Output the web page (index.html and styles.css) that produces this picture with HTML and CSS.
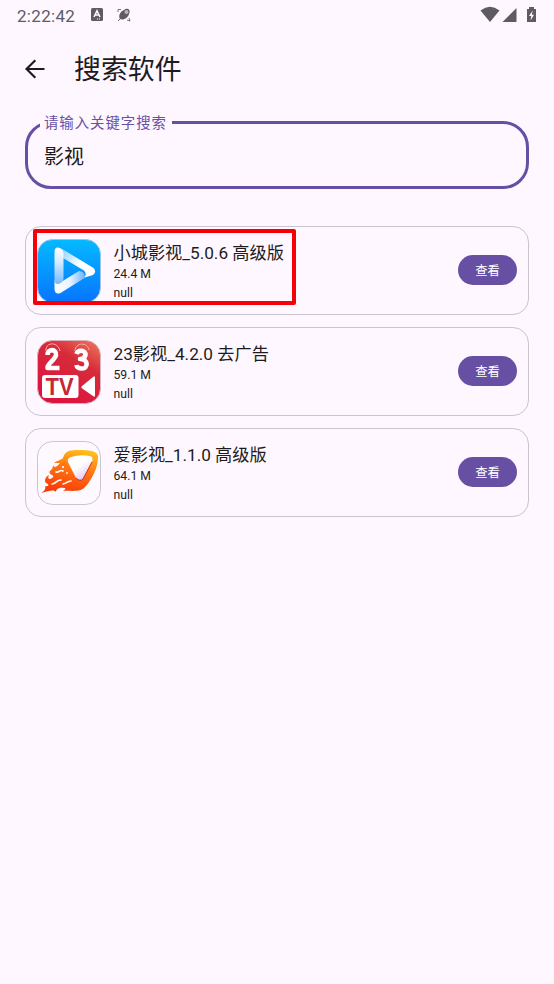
FILE: index.html
```html
<!DOCTYPE html>
<html lang="zh-CN">
<head>
<meta charset="utf-8">
<title>搜索软件</title>
<link rel="stylesheet" href="styles.css">
</head>
<body>
<header class="status">
  <span class="clock">2:22:42</span>
  <svg class="note-a" width="12" height="13" viewBox="0 0 12 13"><rect width="12" height="13" rx="1.5" fill="#5f5b63"/><path d="M3 9 L6 2.8 L9 9 M4.2 7 H7.8" fill="none" stroke="#fef7ff" stroke-width="1.5"/><path d="M6 11h1M8 11h1" stroke="#fef7ff"/></svg>
  <svg class="note-b" width="14" height="14" viewBox="0 0 14 14"><path d="M2.8 10.8 C1 7 4 3 7 2 C11-1 14 2 12 6 C11 10 6 13 2.8 10.8Z" fill="#5f5b63"/><circle cx="9.5" cy="4" r="2" fill="#b9b3bb"/><path d="M1 4V1.5H4M1 13l2-2M10 12l3 1-1-3" fill="none" stroke="#77727a"/></svg>
  <svg class="signals" width="58" height="18" viewBox="0 0 58 18"><path d="M0.5 4.5 Q10 -2.8 19.5 4.5 L10 16Z M22.5 16 L36.5 2V16Z" fill="#5f5b63"/><path d="M47 3h2V1h5v2h2v13H47Z" fill="#5f5b63"/><path d="M52.7 4.5 L49 10h2.2l-.6 4.5L54 8.7h-2.2Z" fill="#fef7ff"/></svg>
</header>
<nav class="appbar">
  <svg class="back" width="20" height="20" viewBox="0 0 20 20"><path d="M19.5 10H1.8M10.3 1.2L1.5 10l8.8 8.8" fill="none" stroke="#1d1b20" stroke-width="2.2"/></svg>
  <h1>搜索软件</h1>
</nav>
<main>
  <fieldset class="field">
    <legend>请输入关键字搜索</legend>
    <div class="value">影视</div>
  </fieldset>
  <section class="list">
    <article class="card">
      <svg class="icon" viewBox="0 0 64 64">
        <defs>
          <linearGradient id="sky" x2="0" y2="1"><stop stop-color="#04baff"/><stop offset="1" stop-color="#0874ff"/></linearGradient>
          <linearGradient id="side" x2="0" y2="1"><stop stop-color="#fff"/><stop offset=".4" stop-color="#d6ecff"/><stop offset="1" stop-color="#75b9ff"/></linearGradient>
          <linearGradient id="top" x2="1" y2=".5"><stop stop-color="#8bcfff"/><stop offset=".65" stop-color="#fff"/></linearGradient>
          <linearGradient id="low" x2="1"><stop stop-color="#fff"/><stop offset=".5" stop-color="#eaf5ff"/><stop offset="1" stop-color="#6db4ff"/></linearGradient>
        </defs>
        <rect x=".5" y=".5" width="63" height="63" rx="15" fill="url(#sky)" stroke="#9ac5e8"/>
        <path d="M26 19 L47 31.5 Q51 36 46 39 L56 36 Q60 33 56.5 29 L24 9.3Z" fill="url(#top)"/>
        <path d="M17.5 50V41 Q20 46 26.5 41.5 L42 32 Q49 33 47.5 39 L23.5 54 Q18 56 17.5 50Z" fill="url(#low)"/>
        <path d="M17.5 13 Q17.5 7 23 9 Q27 11.5 26.5 16 V40 Q25 45 20 45 Q17.5 44 17.5 41Z" fill="url(#side)"/>
      </svg>
      <div class="info"><h2>小城影视_5.0.6 高级版</h2><p>24.4 M</p><p>null</p></div>
      <button>查看</button>
      <div class="mark"></div>
    </article>
    <article class="card">
      <svg class="icon" viewBox="0 0 64 64">
        <defs><linearGradient id="red" x1="1" x2=".4" y2="1"><stop stop-color="#f07a5d"/><stop offset=".4" stop-color="#d62b3a"/><stop offset="1" stop-color="#df1340"/></linearGradient></defs>
        <rect x=".5" y=".5" width="63" height="63" rx="15" fill="url(#red)" stroke="#d5b5bd"/>
        <g fill="none" stroke="#fff" stroke-width="4.6" stroke-linejoin="round"><path d="M10.5 15 C10.5 8 20 9 19 15 C18 20 10 24 10.5 28H22.5"/><path d="M39.5 14 C41 9 49 10 48.5 15 Q47.5 19 43 19 C52 19 51 29 45 28.5 Q40 28.5 39.5 25"/></g>
        <g fill="none" stroke="#f6b4ac"><path d="M9 11 C8 2 21 1 23 11M38 11 C38 2 51 2 52 10"/></g>
        <rect x="5" y="35" width="36.5" height="23" rx="3" fill="#fff"/>
        <text class="tv" x="8.5" y="55" textLength="28" lengthAdjust="spacingAndGlyphs">TV</text>
        <path d="M44.5 46.5 L56 37 Q58 35 58 38V55 Q58 58 56 56 L44.5 48Z" fill="#fff"/>
      </svg>
      <div class="info"><h2>23影视_4.2.0 去广告</h2><p>59.1 M</p><p>null</p></div>
      <button>查看</button>
    </article>
    <article class="card">
      <svg class="icon" viewBox="0 0 64 64">
        <defs><linearGradient id="fire" x1=".8" y1="0" x2=".45" y2="1"><stop stop-color="#ffc31a"/><stop offset=".45" stop-color="#ff7613"/><stop offset="1" stop-color="#f83b08"/></linearGradient>
        <linearGradient id="pearl" x2=".7" y2="1"><stop offset=".5" stop-color="#fff"/><stop offset="1" stop-color="#dfc0ed"/></linearGradient></defs>
        <rect x=".5" y=".5" width="63" height="63" rx="15" fill="#fef9ff" stroke="#cac4d0"/>
        <path d="M26 17 C28 9 34 9 42 9 C50 9 62 9 61 17 C61 27 54 40 48 46 C43 52 33 49 26 50 C29 48 29 47 27 47 C21 46 19 49 19 51 C16 48 13 50 4 52 C8 50 9 47 8 45 C10 46 14 44 9 42 C7 40 8 36 12 34 C10 38 13 39 15 37 C20 34 10 34 13 30 C15 28 16 27 16 24 C18 28 20 25 23 22 C21 22 19 22 17 22 C21 19 24 19 26 17Z" fill="url(#fire)"/>
        <path d="M34 16 Q43 13 53 15 Q57 16 55 21 L46 38 Q43 41 39 37 L31 21 Q30 17 34 16Z" fill="url(#pearl)"/>
        <path d="M39 37 Q43 41 46 38 L55 21" fill="none" stroke="#cf2d20" stroke-width="1"/>
        <path d="M15 43 C19 43 19 39 24 39 M26 43 C29 43 30 40 34 40 M19 31 C22 32 23 28 26 30" fill="none" stroke="#fff" stroke-width="1.6" stroke-linecap="round"/>
        <circle cx="26" cy="26" r="1.1" fill="#fff"/><circle cx="30" cy="32" r=".9" fill="#fff"/>
      </svg>
      <div class="info"><h2>爱影视_1.1.0 高级版</h2><p>64.1 M</p><p>null</p></div>
      <button>查看</button>
    </article>
  </section>
</main>
</body>
</html>
```
FILE: styles.css
```css
* { box-sizing: border-box; }
body { margin: 0; height: 984px; background: #fef7ff; color: #1d1b20; font-family: Roboto, "Noto Sans CJK SC", sans-serif; overflow: hidden; }
h1, h2, p { margin: 0; font-weight: 400; }
svg { display: block; flex: none; }
.status { display: flex; height: 29px; align-items: center; padding: 0 16px 0 17px; }
.clock { width: 74px; padding-top: 2px; font-size: 17px; color: #5f5b63; letter-spacing: .3px; white-space: nowrap; }
.note-b { margin-left: 14px; }
.signals { margin-left: auto; }
.appbar { display: flex; height: 79px; align-items: center; padding-left: 25px; }
.appbar h1 { margin-left: 29px; padding-top: 3px; font-size: 26.9px; line-height: 36px; }
main { padding: 0 25px; }
.field { margin: 5px 0 0; padding: 0 16px; height: 76px; min-width: 0; border: 3px solid #6750a4; border-radius: 26px; }
.field legend { height: 19px; margin-left: -4px; padding: 0 5px 0 4px; font-size: 14.4px; letter-spacing: .98px; line-height: 22px; color: #6750a4; }
.field .value { padding-top: 10px; font-size: 20px; line-height: 30px; }
.list { display: flex; flex-direction: column; gap: 12px; margin-top: 37px; }
.card { position: relative; display: flex; height: 89px; padding: 0 11px; align-items: center; border: 1px solid #cac4d0; border-radius: 16px; }
.icon { width: 64px; height: 64px; }
.tv { font: 700 24px "Liberation Sans", sans-serif; fill: #c82632; }
.info { flex: 1; margin-left: 12.5px; padding-top: 2px; }
.info h2 { padding-top: 1px; font-size: 17.2px; line-height: 24px; white-space: nowrap; }
.info p { font-size: 12.2px; line-height: 19px; }
.card button { width: 59px; height: 30px; margin-bottom: 1px; padding: 0; border: 0; border-radius: 15px; background: #6750a4; color: #fff; font: 12.3px "Noto Sans CJK SC", sans-serif; }
.mark { position: absolute; left: 7px; top: 2px; width: 263px; height: 76px; border: 4px solid #f50009; border-radius: 2px; }
```
